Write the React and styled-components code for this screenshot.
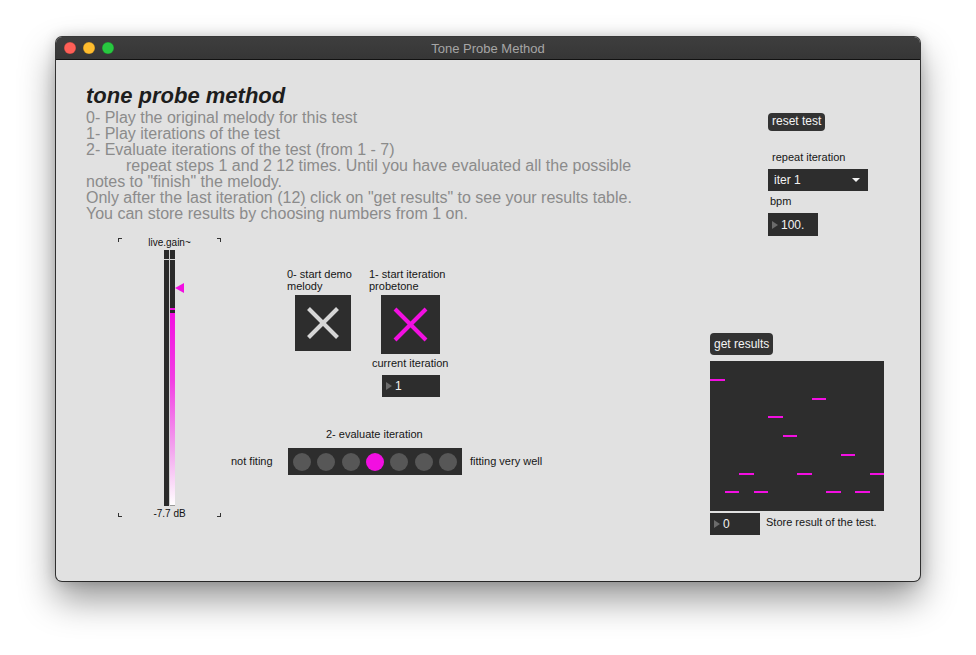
import React from "react";
import styled, { createGlobalStyle } from "styled-components";

const MAGENTA = "#f20fe1";
const FONT = `"Liberation Sans", Arial, Helvetica, sans-serif`;

const Global = createGlobalStyle`
  html, body { margin: 0; padding: 0; background: #ffffff; }
  body { font-family: ${FONT}; }
  * { box-sizing: border-box; }
`;

const Page = styled.div`
  width: 976px;
  height: 655px;
  padding: 37px 0 0 56px;
  background: #fff;
  overflow: hidden;
`;

const Window = styled.div`
  width: 864px;
  height: 544px;
  display: flex;
  flex-direction: column;
  border-radius: 6px;
  overflow: hidden;
  background: #e1e1e1;
  box-shadow: 0 0 0 1px rgba(0, 0, 0, 0.75), 0 18px 36px rgba(0, 0, 0, 0.42),
    0 0 14px rgba(0, 0, 0, 0.18);
`;

const TitleBar = styled.div`
  height: 23px;
  flex: none;
  display: flex;
  align-items: center;
  position: relative;
  padding-left: 8px;
  background: linear-gradient(#3e3e3e, #363636);
  border-bottom: 1px solid #111;
`;

const Lights = styled.div`
  display: flex;
  gap: 7px;
`;

const Light = styled.span`
  width: 12px;
  height: 12px;
  border-radius: 50%;
  background: ${(p) => p.$c};
  box-shadow: inset 0 0 0 0.5px rgba(0, 0, 0, 0.25);
`;

const WinTitle = styled.div`
  position: absolute;
  left: 0;
  right: 0;
  text-align: center;
  font-size: 13px;
  color: #a6a6a6;
  pointer-events: none;
`;

const Canvas = styled.div`
  position: relative;
  flex: 1;
`;

/* a Max object placed on the free patcher canvas */
const Obj = styled.div`
  position: absolute;
  left: ${(p) => p.$x}px;
  top: ${(p) => p.$y}px;
`;

const TextBlock = styled(Obj)`
  display: flex;
  flex-direction: column;
`;

const Heading = styled.div`
  font-size: 22px;
  line-height: 24px;
  font-weight: bold;
  font-style: italic;
  color: #1d1d1d;
  margin-bottom: 2px;
`;

const Line = styled.div`
  font-size: 16px;
  line-height: 16px;
  color: #8b8b8b;
  white-space: pre;
  padding-left: ${(p) => (p.$indent ? 40 : 0)}px;
`;

const Label = styled(Obj)`
  font-size: ${(p) => p.$size || 11}px;
  line-height: ${(p) => (p.$size || 11) + 1}px;
  color: #161616;
  white-space: pre;
`;

const Button = styled(Obj)`
  height: ${(p) => p.$h}px;
  padding: 0 4px ${(p) => p.$lift || 0}px;
  display: flex;
  align-items: center;
  border-radius: 4px;
  background: #333333;
  color: #f4f4f4;
  font-size: 12px;
`;

const DarkBox = styled(Obj)`
  width: ${(p) => p.$w}px;
  height: ${(p) => p.$h}px;
  background: #2d2d2d;
  display: flex;
  align-items: center;
  color: #f2f2f2;
  font-size: 12px;
`;

const NumArrow = styled.span`
  width: 0;
  height: 0;
  margin: 0 3px 0 4px;
  border-top: 4.5px solid transparent;
  border-bottom: 4.5px solid transparent;
  border-left: 6px solid #6b6b6b;
`;

const MenuText = styled.span`
  flex: 1;
  padding-left: 6px;
`;

const MenuArrow = styled.span`
  width: 0;
  height: 0;
  margin-right: 8px;
  border-left: 4px solid transparent;
  border-right: 4px solid transparent;
  border-top: 4px solid #f2f2f2;
`;

const ToggleBox = styled(Obj)`
  width: ${(p) => p.$s}px;
  height: ${(p) => p.$s}px;
  background: #2d2d2d;
  display: flex;
`;

const RadioBox = styled(Obj)`
  width: 174px;
  height: 27px;
  background: #2d2d2d;
  display: flex;
  align-items: center;
  justify-content: center;
  gap: 6.4px;
`;

const Dot = styled.span`
  width: 18px;
  height: 18px;
  border-radius: 50%;
  background: ${(p) => (p.$on ? MAGENTA : "#575757")};
`;

const Matrix = styled(Obj)`
  width: 174px;
  height: 150px;
  background: #2d2d2d;
  display: grid;
  grid-template-columns: repeat(12, 1fr);
`;

const MatrixCol = styled.div`
  display: flex;
  flex-direction: column;
`;

const MatrixBar = styled.span`
  height: 2px;
  width: 100%;
  background: ${MAGENTA};
`;

/* live.gain~ */
const Gain = styled(Obj)`
  width: 103px;
  height: 279px;
  display: flex;
  flex-direction: column;
  align-items: center;
`;

const Corner = styled.span`
  position: absolute;
  width: 4px;
  height: 4px;
  border-color: #333;
  border-style: solid;
  border-width: 0;
  ${(p) => (p.$v === "t" ? "top: 0;" : "bottom: 0;")}
  ${(p) => (p.$h === "l" ? "left: 0;" : "right: 0;")}
  ${(p) => (p.$v === "t" ? "border-top-width: 1px;" : "border-bottom-width: 1px;")}
  ${(p) => (p.$h === "l" ? "border-left-width: 1px;" : "border-right-width: 1px;")}
`;

const GainLabel = styled.div`
  flex: none;
  font-size: 10px;
  line-height: 10px;
  height: 12px;
  color: #111;
`;

const Meter = styled.div`
  position: relative;
  flex: none;
  width: 11px;
  height: 256px;
  display: flex;
  gap: 1px;
  background: #cfcfcf;
`;

const Track = styled.div`
  flex: 1;
  display: flex;
  flex-direction: column;
  background: #2a2a2a;
`;

const TrackSep = styled.span`
  height: 1px;
  margin-top: 9px;
  background: #d8d8d8;
  flex: none;
`;

const Marker = styled.span`
  height: 2px;
  margin-top: ${(p) => p.$top}px;
  background: ${MAGENTA};
  flex: none;
`;

const Fill = styled.span`
  flex: 1;
  margin-top: 3px;
  background: linear-gradient(
    ${MAGENTA} 0%,
    #f23ee3 35%,
    #f3a3ee 70%,
    #ffffff 100%
  );
  box-shadow: inset -1px -8px 0 -7px #999;
`;

const Handle = styled.span`
  position: absolute;
  left: 11px;
  top: 33px;
  width: 0;
  height: 0;
  border-top: 5px solid transparent;
  border-bottom: 5px solid transparent;
  border-right: 9px solid ${MAGENTA};
`;

const GainValue = styled.div`
  flex: none;
  font-size: 10px;
  line-height: 12px;
  margin-top: 2px;
  color: #111;
`;

const XIcon = ({ size, inset, end, color }) => (
  <svg width={size} height={size} viewBox={`0 0 ${size} ${size}`}>
    <line x1={inset} y1={inset} x2={end} y2={end} stroke={color} strokeWidth="4" />
    <line x1={end} y1={inset} x2={inset} y2={end} stroke={color} strokeWidth="4" />
  </svg>
);

const results = [1, 7, 6, 7, 3, 4, 6, 2, 7, 5, 7, 6];

export default function App() {
  return (
    <Page>
      <Global />
      <Window>
        <TitleBar>
          <Lights>
            <Light $c="#fe5f57" />
            <Light $c="#febc2e" />
            <Light $c="#28c840" />
          </Lights>
          <WinTitle>Tone Probe Method</WinTitle>
        </TitleBar>
        <Canvas>
          <TextBlock $x={30} $y={24}>
            <Heading>tone probe method</Heading>
            <Line>0- Play the original melody for this test</Line>
            <Line>1- Play iterations of the test</Line>
            <Line>2- Evaluate iterations of the test (from 1 - 7)</Line>
            <Line $indent>
              repeat steps 1 and 2 12 times. Until you have evaluated all the possible
            </Line>
            <Line>notes to "finish" the melody.</Line>
            <Line>
              Only after the last iteration (12) click on "get results" to see your results table.
            </Line>
            <Line>You can store results by choosing numbers from 1 on.</Line>
          </TextBlock>

          <Gain $x={62} $y={178}>
            <Corner $v="t" $h="l" />
            <Corner $v="t" $h="r" />
            <Corner $v="b" $h="l" />
            <Corner $v="b" $h="r" />
            <GainLabel>live.gain~</GainLabel>
            <Meter>
              <Track>
                <TrackSep />
              </Track>
              <Track>
                <TrackSep />
                <Marker $top={48} />
                <Fill />
              </Track>
              <Handle />
            </Meter>
            <GainValue>-7.7 dB</GainValue>
          </Gain>

          <Label $x={231} $y={208}>{"0- start demo\nmelody"}</Label>
          <ToggleBox $x={239} $y={235} $s={56}>
            <XIcon size={56} inset={13.5} end={42.5} color="#d6d6d6" />
          </ToggleBox>

          <Label $x={313} $y={208}>{"1- start iteration\nprobetone"}</Label>
          <ToggleBox $x={325} $y={235} $s={59}>
            <XIcon size={59} inset={14} end={45} color={MAGENTA} />
          </ToggleBox>

          <Label $x={316} $y={297}>current iteration</Label>
          <DarkBox $x={326} $y={315} $w={58} $h={22}>
            <NumArrow />1
          </DarkBox>

          <Label $x={270} $y={368}>2- evaluate iteration</Label>
          <Label $x={175} $y={395}>not fiting</Label>
          <RadioBox $x={232} $y={388}>
            {[0, 1, 2, 3, 4, 5, 6].map((i) => (
              <Dot key={i} $on={i === 3} />
            ))}
          </RadioBox>
          <Label $x={414} $y={395}>fitting very well</Label>

          <Button $x={712} $y={53} $h={18} $lift={3}>reset test</Button>
          <Label $x={716} $y={91}>repeat iteration</Label>
          <DarkBox $x={712} $y={109} $w={100} $h={22}>
            <MenuText>iter 1</MenuText>
            <MenuArrow />
          </DarkBox>
          <Label $x={714} $y={135}>bpm</Label>
          <DarkBox $x={712} $y={153} $w={50} $h={23}>
            <NumArrow />100.
          </DarkBox>

          <Button $x={654} $y={273} $h={22}>get results</Button>
          <Matrix $x={654} $y={301}>
            {results.map((r, i) => (
              <MatrixCol key={i}>
                <MatrixBar style={{ marginTop: r * 18.75 - 1 }} />
              </MatrixCol>
            ))}
          </Matrix>
          <DarkBox $x={654} $y={453} $w={50} $h={22}>
            <NumArrow />0
          </DarkBox>
          <Label $x={710} $y={456}>Store result of the test.</Label>
        </Canvas>
      </Window>
    </Page>
  );
}
